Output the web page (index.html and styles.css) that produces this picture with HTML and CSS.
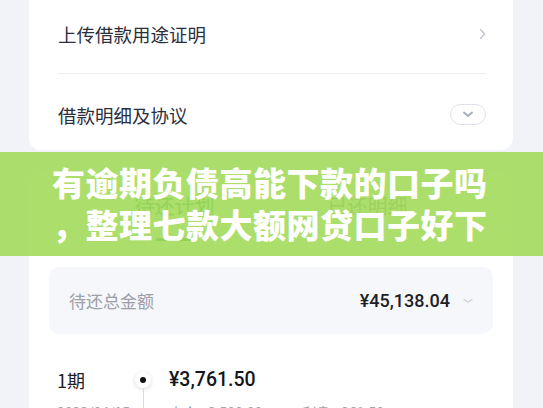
FILE: index.html
```html
<!DOCTYPE html>
<html lang="zh-CN">
<head>
<meta charset="utf-8">
<link rel="stylesheet" href="styles.css">
</head>
<body>
<div class="page">
  <section class="card card-top">
    <div class="row row-first">
      <span class="row-label">上传借款用途证明</span>
      <svg class="chev-right" width="7" height="12" viewBox="0 0 7 12"><path d="M1.5 1.5 L5.5 6 L1.5 10.5" fill="none" stroke="#c3c6cf" stroke-width="1.5" stroke-linecap="round" stroke-linejoin="round"/></svg>
    </div>
    <div class="row row-second">
      <span class="row-label">借款明细及协议</span>
      <span class="pill">
        <svg width="12" height="7" viewBox="0 0 12 7"><path d="M2 1.6 L6 5 L10 1.6" fill="none" stroke="#a9aec3" stroke-width="2" stroke-linecap="round" stroke-linejoin="round"/></svg>
      </span>
    </div>
  </section>

  <section class="card card-plan">
    <div class="tabs">
      <div class="tab active"><span>待还计划</span><i class="tab-line"></i></div>
      <div class="tab"><span>已还明细</span></div>
    </div>
    <div class="total">
      <span class="total-label">待还总金额</span>
      <span class="total-right">
        <span class="total-amount">¥45,138.04</span>
        <svg width="10" height="6" viewBox="0 0 10 6"><path d="M1 1.5 L5 4.3 L9 1.5" fill="none" stroke="#cdd0d8" stroke-width="1.3" stroke-linecap="round" stroke-linejoin="round"/></svg>
      </span>
    </div>
    <div class="period">
      <div class="period-name">1期</div>
      <div class="period-mark"><span class="dot"><i></i></span><span class="vline"></span></div>
      <div class="period-body">
        <div class="period-amount">¥3,761.50</div>
        <div class="period-sub"><span>本金 ¥3,500.00</span><span>利息 ¥261.50</span></div>
      </div>
    </div>
    <div class="period-date">2023/04/15</div>
  </section>
</div>

<div class="banner">
  <div class="banner-line">有逾期负债高能下款的口子吗</div>
  <div class="banner-line">，整理七款大额网贷口子好下</div>
</div>
</body>
</html>
```

FILE: styles.css
```css
* { box-sizing: border-box; }
html, body {
  margin: 0;
  padding: 0;
  width: 543px;
  height: 408px;
  overflow: hidden;
  background: #f1f3f9;
  font-family: "Noto Sans CJK SC", "Noto Sans", sans-serif;
}
.page {
  width: 484px;
  margin-left: 29px;
  display: flex;
  flex-direction: column;
  gap: 23px;
}
.card {
  background: #ffffff;
  border-radius: 12px;
}
.card-top {
  margin-top: -16px;
  padding: 0 27px 0 29px;
}
.row {
  display: flex;
  align-items: center;
  justify-content: space-between;
}
.row-first {
  height: 90px;
  padding-top: 11px;
  border-bottom: 1px solid #eceef2;
}
.row-second {
  height: 76px;
  padding-top: 6px;
}
.row-label {
  font-size: 18.5px;
  color: #2b2f3b;
  line-height: 24px;
}
.pill {
  width: 36px;
  height: 21px;
  border: 1px solid #dfe2ec;
  border-radius: 11px;
  display: flex;
  align-items: center;
  justify-content: center;
  margin-top: -2px;
}
.card-plan {
  padding: 0 20px;
  height: 260px;
  position: relative;
}
.tabs {
  display: flex;
  margin-left: 29px;
  width: 386px;
  height: 68px;
}
.tab {
  flex: 1;
  display: flex;
  flex-direction: column;
  align-items: center;
  padding-top: 20px;
  font-size: 20px;
  line-height: 26px;
  color: #8d8f99;
}
.tab.active { color: #2fa84f; }
.tab-line {
  display: block;
  width: 37px;
  height: 3px;
  border-radius: 2px;
  background: #2fa84f;
  margin-top: 19px;
}
.total {
  margin-top: 26px;
  height: 67px;
  background: #f5f7fb;
  border-radius: 10px;
  display: flex;
  align-items: center;
  justify-content: space-between;
  padding: 0 20px;
}
.total-label {
  font-size: 17px;
  color: #9c9ea8;
}
.total-right {
  display: flex;
  align-items: center;
  gap: 13px;
}
.total-amount {
  font-family: Roboto, "Noto Sans", sans-serif;
  font-weight: 500;
  font-size: 18px;
  color: #1e2026;
}
.period {
  display: flex;
  margin-top: 33px;
  padding-left: 8px;
}
.period-name {
  width: 78px;
  font-size: 18px;
  line-height: 26px;
  color: #1e2026;
}
.period-mark {
  width: 34px;
  display: flex;
  flex-direction: column;
  align-items: flex-start;
}
.dot {
  width: 16px;
  height: 16px;
  margin-top: 5px;
  border-radius: 50%;
  background: #fff;
  box-shadow: 0 1px 4px rgba(40, 50, 80, 0.18);
  display: flex;
  align-items: center;
  justify-content: center;
}
.dot i {
  width: 6px;
  height: 6px;
  border-radius: 50%;
  background: #111;
}
.vline {
  width: 1px;
  height: 40px;
  background: #d9dce4;
  margin-left: 7.5px;
}
.period-amount {
  font-family: Roboto, "Noto Sans", sans-serif;
  font-weight: 500;
  font-size: 19.5px;
  line-height: 26px;
  color: #15171c;
}
.period-sub {
  margin-top: 9px;
  display: flex;
  gap: 40px;
  font-size: 14px;
  color: #a3a5ae;
}
.period-date {
  position: absolute;
  left: 28px;
  top: 229px;
  font-size: 14px;
  color: #a3a5ae;
}
.banner {
  position: absolute;
  left: 0;
  top: 152px;
  width: 543px;
  height: 104px;
  background: rgba(160, 218, 88, 0.88);
  padding: 9px 0 0 52px;
}
.banner-line {
  font-size: 33px;
  line-height: 42px;
  font-weight: 900;
  color: #ffffff;
  letter-spacing: 0.5px;
  white-space: nowrap;
}
```
